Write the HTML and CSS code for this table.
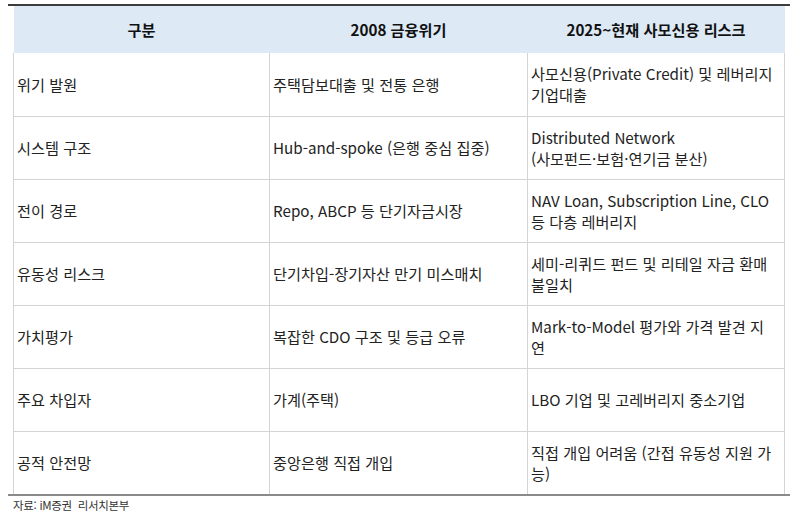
FILE: index.html
```html
<!DOCTYPE html>
<html lang="ko">
<head>
<meta charset="utf-8">
<link rel="stylesheet" href="styles.css">
</head>
<body>
<div class="report">
  <div class="rule rule-top"></div>
  <table class="cmp">
    <colgroup>
      <col class="c1"><col class="c2"><col class="c3">
    </colgroup>
    <thead>
      <tr><th>구분</th><th>2008 금융위기</th><th>2025~현재 사모신용 리스크</th></tr>
    </thead>
    <tbody>
      <tr><td>위기 발원</td><td>주택담보대출 및 전통 은행</td><td>사모신용(Private Credit) 및 레버리지<br>기업대출</td></tr>
      <tr><td>시스템 구조</td><td>Hub-and-spoke (은행 중심 집중)</td><td>Distributed Network<br>(사모펀드·보험·연기금 분산)</td></tr>
      <tr><td>전이 경로</td><td>Repo, ABCP 등 단기자금시장</td><td>NAV Loan, Subscription Line, CLO<br>등 다층 레버리지</td></tr>
      <tr><td>유동성 리스크</td><td>단기차입-장기자산 만기 미스매치</td><td>세미-리퀴드 펀드 및 리테일 자금 환매<br>불일치</td></tr>
      <tr><td>가치평가</td><td>복잡한 CDO 구조 및 등급 오류</td><td>Mark-to-Model 평가와 가격 발견 지<br>연</td></tr>
      <tr><td>주요 차입자</td><td>가계(주택)</td><td>LBO 기업 및 고레버리지 중소기업</td></tr>
      <tr><td>공적 안전망</td><td>중앙은행 직접 개입</td><td>직접 개입 어려움 (간접 유동성 지원 가<br>능)</td></tr>
    </tbody>
  </table>
  <div class="rule rule-bottom"></div>
  <p class="source">자료: iM증권&nbsp; 리서치본부</p>
</div>
</body>
</html>
```

FILE: styles.css
```css
html, body {
  margin: 0;
  padding: 0;
  background: #ffffff;
}

body {
  font-family: "Noto Sans CJK KR", "Noto Sans", sans-serif;
  color: #222222;
}

.report {
  width: 782px;
  padding: 4px 0 0 8px;
}

.rule {
  height: 2px;
  width: 782px;
}

.rule-top {
  background: #3c3c3c;
}

.rule-bottom {
  background: #8a8a8a;
  margin-top: -1px;
}

.cmp {
  margin-left: 5px;
  width: 771px;
  border-collapse: collapse;
  table-layout: fixed;
  font-size: 15.2px;
  line-height: 21px;
}

.c1 { width: 256px; }
.c2 { width: 258px; }
.c3 { width: 257px; }

.cmp thead tr {
  height: 47px;
  background: #dde9f5;
}

.cmp th {
  font-weight: bold;
  color: #111111;
  text-align: center;
  padding: 0;
  border: none;
}

.cmp tbody tr {
  height: 63px;
}

.cmp td {
  border: 1px solid #d4d4d4;
  padding: 0 0 0 3px;
  vertical-align: middle;
  text-align: left;
  white-space: nowrap;
}

.cmp tbody tr:first-child td {
  border-top: none;
}

.source {
  margin: 2px 0 0 5px;
  font-size: 11.5px;
  line-height: 14px;
  color: #333333;
  letter-spacing: -0.3px;
}
```
